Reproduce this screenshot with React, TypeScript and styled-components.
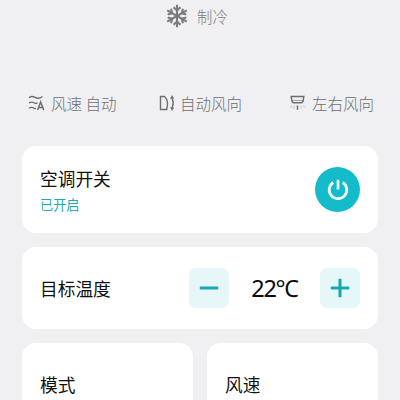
import React from 'react';
import styled, { createGlobalStyle } from 'styled-components';

const GlobalStyle = createGlobalStyle`
  * { box-sizing: border-box; }
  body {
    margin: 0;
    background: #f0f0f2;
    font-family: "Noto Sans CJK SC", sans-serif;
    overflow: hidden;
  }
`;

const Screen = styled.main`
  height: 400px;
  overflow: hidden;
  display: flex;
  flex-direction: column;
  background: #f0f0f2;
`;

const ModeStatus = styled.div`
  display: flex;
  align-items: center;
  height: 24px;
  margin: 4px 0 0 165px;
  gap: 8px;
  color: #7c7c7e;
  font-size: 15.4px;
  font-weight: 300;
  line-height: 24px;
`;

const StatusBar = styled.div`
  display: grid;
  grid-template-columns: 131px 130px 1fr;
  height: 24px;
  margin: 63px 0 0 28px;
`;

const StatusItem = styled.div`
  display: flex;
  align-items: center;
  gap: 5px;
  color: #6e6e70;
  font-size: 15.5px;
  font-weight: 300;
  line-height: 24px;
  white-space: nowrap;
`;

const Icon = styled.svg`
  display: block;
  flex: none;
  fill: none;
  stroke: currentColor;
`;

const Cards = styled.section`
  display: grid;
  grid-template-columns: 1fr 1fr;
  grid-template-rows: 87px 82px 82px;
  gap: 14px;
  margin: 31px 22px 0;
`;

const Card = styled.div<{ $wide?: boolean }>`
  grid-column: ${(p) => (p.$wide ? '1 / -1' : 'auto')};
  display: flex;
  align-items: center;
  justify-content: space-between;
  padding: 0 18px;
  border-radius: 14px;
  background: #fff;
`;

const Title = styled.div`
  font-size: 17.7px;
  line-height: 26px;
  color: #111;
`;

const State = styled.div`
  margin-top: 5px;
  font-size: 13.2px;
  line-height: 18px;
  color: #20a9b3;
`;

const PowerButton = styled.button`
  display: grid;
  place-items: center;
  width: 45px;
  height: 45px;
  padding: 0;
  border: 0;
  border-radius: 50%;
  background: #14bbca;
  color: #f4ffff;
`;

const Stepper = styled.div`
  display: flex;
  align-items: center;
`;

const StepButton = styled.button`
  display: grid;
  place-items: center;
  width: 40px;
  height: 40px;
  padding: 0;
  border: 0;
  border-radius: 7px;
  background: #e5f7f8;
  color: #14a9b5;
`;

const Temperature = styled.div`
  width: 91px;
  text-align: center;
  font-family: "Noto Sans", "Noto Sans CJK SC", sans-serif;
  font-size: 23.5px;
  line-height: 34px;
  letter-spacing: -1.3px;
  color: #0b0b0b;
`;

const SnowflakeIcon = () => (
  <Icon width="24" height="24" viewBox="0 0 24 24" strokeWidth="2.1">
    {[0, 60, 120, 180, 240, 300].map((angle) => (
      <path key={angle} transform={`rotate(${angle} 12 12)`} d="M12 12V.7M8.600 3.200 12 6.500l3.400-3.300" />
    ))}
  </Icon>
);

const AutoSpeedIcon = () => (
  <Icon width="18" height="18" viewBox="0 0 18 18" strokeWidth="1.3">
    <path d="M1 3.700c2-1.600 4-1.500 6-.3s4.800 1.100 7.500-.9M1 9c2-1.400 3.500-1.200 5-.2 1.300.8 2.300.8 3.500.1M1 14.300c2-1.400 3.500-1.200 5-.2.7.4 1.300.5 2 .4" />
    <path strokeWidth="1.500" d="m9.600 16 3-8 3.200 8M10.700 13.400h4" />
  </Icon>
);

const VerticalSwingIcon = () => (
  <Icon width="16" height="18" viewBox="0 0 16 18" strokeWidth="1.4">
    <path d="M1.500 2.500h3.800c2.200 1.800 3.200 4.200 3.200 7 0 2.200-.3 4-.8 6H1.500z" />
    <path d="M13.200 4.500c1.300 3 1.300 6 0 9" />
    <path fill="currentColor" stroke="none" d="m11.200 4.900 1.700-4 2.300 3.700zM11.200 13.100l1.700 4 2.300-3.700z" />
  </Icon>
);

const HorizontalSwingIcon = () => (
  <Icon width="18" height="18" viewBox="0 0 18 18" strokeWidth="1.500">
    <path d="M2.200 2.500h12.600L14 7.300c-.2 1-.7 1.400-1.700 1.400H4.700c-1 0-1.500-.4-1.700-1.400z" />
    <path strokeWidth="1" strokeOpacity=".6" d="M3 6.500h11" />
    <path d="M8.500 11.500v4.300" />
    <path strokeOpacity=".28" strokeWidth="1.100" d="m5.500 11.500-1 3.300M11.500 11.500l1 3.300M2.800 11.500l-1.500 2M14.200 11.500l1.500 2" />
  </Icon>
);

const PowerIcon = () => (
  <Icon width="24" height="24" viewBox="0 0 24 24" strokeWidth="2.700">
    <path d="M7.200 4.500a8.800 8.800 0 1 0 9.600 0M12 1.800v9.700" />
  </Icon>
);

export default function App() {
  return (
    <>
      <GlobalStyle />
      <Screen>
        <ModeStatus>
          <SnowflakeIcon />
          制冷
        </ModeStatus>
        <StatusBar>
          <StatusItem><AutoSpeedIcon />风速 自动</StatusItem>
          <StatusItem><VerticalSwingIcon />自动风向</StatusItem>
          <StatusItem><HorizontalSwingIcon />左右风向</StatusItem>
        </StatusBar>
        <Cards>
          <Card $wide>
            <div>
              <Title>空调开关</Title>
              <State>已开启</State>
            </div>
            <PowerButton aria-label="空调开关"><PowerIcon /></PowerButton>
          </Card>
          <Card $wide>
            <Title>目标温度</Title>
            <Stepper>
              <StepButton aria-label="降低">
                <Icon width="20" height="20" viewBox="0 0 20 20" strokeWidth="3"><path d="M.8 10h18.400" /></Icon>
              </StepButton>
              <Temperature>22℃</Temperature>
              <StepButton aria-label="升高">
                <Icon width="20" height="20" viewBox="0 0 20 20" strokeWidth="3"><path d="M.8 10h18.400M10 .8v18.400" /></Icon>
              </StepButton>
            </Stepper>
          </Card>
          <Card><Title>模式</Title></Card>
          <Card><Title>风速</Title></Card>
        </Cards>
      </Screen>
    </>
  );
}
